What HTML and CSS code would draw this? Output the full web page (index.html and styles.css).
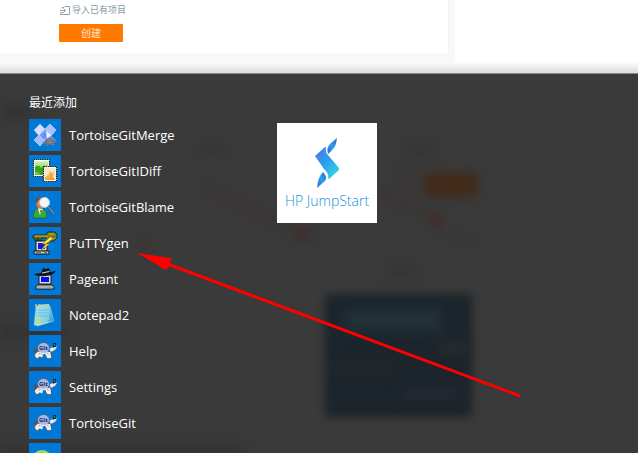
FILE: index.html
```html
<!DOCTYPE html>
<html lang="zh-CN">
<head>
<meta charset="utf-8">
<meta name="viewport" content="width=device-width, initial-scale=1">
<title>开始菜单</title>
<link rel="stylesheet" href="styles.css">
</head>
<body>
<section class="page">
  <div class="frame">
    <div class="card">
      <a class="import" href="#">
        <svg class="import-icon" viewBox="0 0 11 9"><path d="M3 2.500V1.500H5L6 .5H10.500V8.500H1.500V6.500M1 4.500H6M4.500 2.500 6.500 4.500 4.500 6.500H2" fill="none" stroke="#8ea5b0"/></svg>
        导入已有项目
      </a>
      <button class="create" type="button">创建</button>
    </div>
  </div>
</section>

<main class="menu">
  <svg class="backdrop" viewBox="0 74 638 379" aria-hidden="true">
    <defs>
      <filter id="soft" x="-30%" y="-30%" width="160%" height="160%" color-interpolation-filters="sRGB"><feGaussianBlur stdDeviation="4"/></filter>
      <filter id="softer" x="-30%" y="-50%" width="160%" height="200%" color-interpolation-filters="sRGB"><feGaussianBlur stdDeviation="6"/></filter>
    </defs>
    <g filter="url(#soft)">
      <rect x="325" y="294" width="147" height="123" fill="#1c252b"/>
      <rect x="424" y="173" width="54" height="23" fill="#412a18"/>
      <path d="M205 188 300 232" stroke="#3d3433" stroke-width="7"/>
      <path d="M366 186 430 215" stroke="#3d3332" stroke-width="7"/>
      <circle cx="303" cy="235" r="8" fill="#412e2f"/>
      <circle cx="436" cy="221" r="8" fill="#422c2e"/>
      <circle cx="144" cy="246" r="6" fill="#3b3531"/>
      <ellipse cx="461" cy="239" rx="10" ry="5" fill="#3c3531"/>
      <path d="M403 167V190" stroke="#3c3635" stroke-width="10"/>
    </g>
    <g filter="url(#softer)">
      <rect x="345" y="308" width="96" height="24" fill="#213137"/>
      <rect x="334" y="361" width="60" height="16" fill="#22292c"/>
      <rect x="404" y="386" width="54" height="16" fill="#222930"/>
      <rect x="438" y="341" width="30" height="14" fill="#262b2d"/>
    </g>
    <g filter="url(#softer)" fill="#323232">
      <rect x="0" y="326" width="68" height="12"/>
      <rect x="0" y="446" width="245" height="12"/>
      <rect x="200" y="146" width="24" height="7"/>
      <rect x="408" y="146" width="24" height="8"/>
      <rect x="390" y="267" width="24" height="8"/>
      <rect x="2" y="105" width="28" height="14"/>
    </g>
  </svg>

  <section class="recent">
    <h1 class="heading">最近添加</h1>
    <ul class="apps">
      <li><a class="app" href="#">
        <svg class="icon" viewBox="0 0 32 32">
          <defs><linearGradient id="mergeBlue" x1="0" y1="0" x2="1" y2="1"><stop offset="0" stop-color="#a9c0ff"/><stop offset=".5" stop-color="#5c8cf8"/><stop offset="1" stop-color="#c2d4ff"/></linearGradient></defs>
          <path d="M5 11 11 5 16 10 10 17Z" fill="#d5defa" stroke="#9eb9f3" stroke-width=".7"/>
          <path d="M16 10 21 5 27 11 22 17Z" fill="#a9befa" stroke="#c4d5ff" stroke-width=".7"/>
          <path d="M5 21 10 16 16 21 11 27Z" fill="#a8bdf8" stroke="#c6d5fd" stroke-width=".7"/>
          <path d="M16 21 21 16 27 21 22 26Z" fill="#7b9df0"/>
          <path d="M10 16 16 10 22 16 16 22Z" fill="url(#mergeBlue)" stroke="#c3d4ff" stroke-width=".7"/>
          <path d="M17 12 22 16 18 19Z" fill="#f2f6ff"/>
          <ellipse cx="21" cy="22.500" rx="5" ry="3.500" fill="#6b737d"/>
          <path d="M17 23 15 25M18 25V27M24 25V27M25 23 28 22" stroke="#727a81" stroke-width="1.600"/>
          <path d="M18 21H24M18 23.500H24M21 20V25" stroke="#949ba3" stroke-width=".6"/>
        </svg>TortoiseGitMerge</a></li>
      <li><a class="app" href="#">
        <svg class="icon" viewBox="0 0 32 32">
          <defs>
            <linearGradient id="greenStamp" x1="0" y1="0" x2="0" y2="1"><stop offset="0" stop-color="#d7f5b9"/><stop offset=".7" stop-color="#6cc845"/></linearGradient>
            <linearGradient id="orangeStamp" x1="0" y1="0" x2="1" y2="1"><stop offset="0" stop-color="#fbc878"/><stop offset="1" stop-color="#f2931f"/></linearGradient>
          </defs>
          <rect x="4.500" y="4.500" width="16" height="17" fill="#fff"/>
          <rect x="4.500" y="4.500" width="16" height="17" fill="none" stroke="#102515" stroke-width="1.200" stroke-dasharray="1.400 .8"/>
          <rect x="6" y="6" width="13" height="14" fill="url(#greenStamp)"/>
          <path d="M6 12Q10 9 12 13Q16 9 19 12V16H15V20H11L9 17H6Z" fill="#37a51d"/>
          <rect x="14.500" y="11.500" width="13" height="15" fill="#fffaf0"/>
          <rect x="14.500" y="11.500" width="13" height="15" fill="none" stroke="#24190d" stroke-width="1.200" stroke-dasharray="1.400 .8"/>
          <rect x="16" y="13" width="10" height="12" fill="#fae6ca"/>
          <path d="M16 23 18 20 19 21 21 16 23 18 25 17 24 22 26 25H16Z" fill="url(#orangeStamp)"/>
        </svg>TortoiseGitIDiff</a></li>
      <li><a class="app" href="#">
        <svg class="icon" viewBox="0 0 32 32">
          <path d="M4.500 27Q4 19 9 17L12 20 14 18Q19 20 17 27Z" fill="#35ad35" stroke="#156d25" stroke-width=".7"/>
          <path d="M9 17 11 24 14 18Z" fill="#f5f7e9"/>
          <path d="M11 19 12 24 13 19Z" fill="#d33d25"/>
          <ellipse cx="11" cy="12" rx="4" ry="5.500" fill="#c9834f"/>
          <path d="M7 13V9Q8 6 12 6L10 9Q8 10 7 13" fill="#79482b"/>
          <path d="M19 16 25 24" stroke="#4b5662" stroke-width="2"/>
          <path d="M19.500 16 25 23" stroke="#adb7c0" stroke-width=".8"/>
          <circle cx="15.500" cy="11.500" r="5" fill="#f2f5fa" stroke="#c4cbd4"/>
          <path d="M13 11Q14 8 17 9" fill="none" stroke="#fff"/>
        </svg>TortoiseGitBlame</a></li>
      <li><a class="app" href="#">
        <svg class="icon" viewBox="0 0 32 32">
          <path d="M5 8H17L19 5H26L28 8V11L25 14H20L17 11H12V14H10V11H8V14H6V11H4V9Z" fill="#878119" stroke="#242607"/>
          <path d="M6 9H18M20 7H25" stroke="#b9ad35"/>
          <path d="M23 9H26V10H23Z" fill="#0078d7"/>
          <path d="M7 14H18V24H7Z" fill="#e0dfd8" stroke="#181818"/>
          <path d="M9 16H16V22H9Z" fill="#1515e1"/>
          <path d="M5 24H20V27H5Z" fill="#d1d1cc" stroke="#171717"/>
          <path d="M7 25.500H12M15 25.500H18" stroke="#77776f"/>
          <path d="M21 10 13 17H17L11 24 21 17H17L25 11Z" fill="#ffee29" stroke="#6b681d" stroke-width=".6"/>
        </svg>PuTTYgen</a></li>
      <li><a class="app" href="#">
        <svg class="icon" viewBox="0 0 32 32">
          <path d="M10 12H22V21H10Z" fill="#deddd8" stroke="#15171a"/>
          <path d="M12 14H20V19H12Z" fill="#0909f2"/>
          <path d="M8 22H23L25 24V26H7V23Z" fill="#deddd6" stroke="#181818"/>
          <path d="M8 24H24M18 25H22" stroke="#86867e"/>
          <path d="M12 10 14 5 17 6 20 5 21 9 27 8Q25 12 16 13Q8 14 5 11Z" fill="#11161a"/>
          <path d="M13 9.500 20 8 20.500 9 13 10.500Z" fill="#d9d5cd"/>
        </svg>Pageant</a></li>
      <li><a class="app" href="#">
        <svg class="icon" viewBox="0 0 32 32">
          <defs><linearGradient id="padBlue" x1="0" y1="0" x2="1" y2="1"><stop offset="0" stop-color="#b9eeff"/><stop offset="1" stop-color="#269bd5"/></linearGradient></defs>
          <path d="M7 7H21L25 22 9 27 5 26Z" fill="#e4f5d4" stroke="#73a7b2" stroke-width=".6"/>
          <path d="M9 6 20 5 25 22 12 24Z" fill="url(#padBlue)"/>
          <path d="M7 7H20V20L17 25 6 26Z" fill="#8cd9ee" fill-opacity=".75"/>
          <path d="M7 11H19M7 14H19M7 17H19" stroke="#5bb6d7" stroke-width=".7"/>
          <path d="M6 20H16M6 22H15M6 24H14" stroke="#b4dc7b"/>
          <path d="M7 8V5M10 8V5M13 8V5M16 8V5M19 8V5" stroke="#dbce83" stroke-width="1.300"/>
        </svg>Notepad2</a></li>
      <li><a class="app" href="#">
        <svg class="icon" viewBox="0 0 32 32">
          <defs>
            <g id="turtle">
              <path d="M5.500 14 8 17M10 17 7 20 8 22 12 19M17 18 19 22 21 22 20 17" fill="none" stroke="#50545f" stroke-width="3.600" stroke-linejoin="round"/>
              <path d="M10 17 7 20 8 22 12 19M17 18 19 22 21 22 20 17M13 19 12 22" fill="none" stroke="#f0ece5" stroke-width="2.400" stroke-linejoin="round"/>
              <path d="M20 14 23 12 25 13 26 10 28 12 26 15 22 17Z" fill="#f2eee9" stroke="#777b82" stroke-width=".5"/>
              <path d="M24 8H27V12H24Z" fill="#142c42"/>
              <path d="M25 9 26 11" stroke="#20ad9d"/>
              <ellipse cx="14.500" cy="13" rx="6" ry="5.500" fill="#a5b8ee" stroke="#4e5b83" stroke-width=".8"/>
              <path d="M10 17Q15 20 19 17" fill="none" stroke="#ece9e8" stroke-width="1.300"/>
              <text x="10" y="15" class="shell-text">Git</text>
            </g>
          </defs>
          <use href="#turtle"/>
        </svg>Help</a></li>
      <li><a class="app" href="#"><svg class="icon" viewBox="0 0 32 32"><use href="#turtle"/></svg>Settings</a></li>
      <li><a class="app" href="#"><svg class="icon" viewBox="0 0 32 32"><use href="#turtle"/></svg>TortoiseGit</a></li>
      <li><a class="app" href="#" aria-label="应用"><svg class="icon" viewBox="0 0 32 32"><ellipse cx="13" cy="15" rx="9" ry="8" fill="#92df58"/></svg></a></li>
    </ul>
  </section>

  <a class="tile" href="#">
    <svg class="tile-logo" viewBox="0 0 26 52">
      <defs>
        <linearGradient id="ribbon" x1="0" y1="0" x2="1" y2="1"><stop offset="0" stop-color="#4b70ee"/><stop offset=".5" stop-color="#2ba4e9"/><stop offset="1" stop-color="#37e2ea"/></linearGradient>
        <linearGradient id="tip" x1="0" y1="1" x2="1" y2="0"><stop offset="0" stop-color="#3268d2"/><stop offset=".5" stop-color="#27a0ef"/><stop offset="1" stop-color="#3268d2"/></linearGradient>
      </defs>
      <path d="M23 1 22 7Q20 12 14 17Q12 10 17 6Z" fill="url(#tip)"/>
      <path d="M11 10 1 19 10 32Q15 36 14 41L15 42 25 33V31L14 18Q11 15 12 10Z" fill="url(#ribbon)"/>
      <path d="M9 35Q14 40 11 44L3 51Q4 40 9 35Z" fill="url(#tip)"/>
    </svg>
    <span>HP JumpStart</span>
  </a>

  <svg class="arrow" viewBox="0 74 638 379" aria-hidden="true">
    <path d="M165 263 520 396" fill="none" stroke="#f00" stroke-width="3"/>
    <path d="M137 253 171 258 170 265 166 270Z" fill="#f00"/>
  </svg>
</main>
</body>
</html>
```
FILE: styles.css
```css
* {
  box-sizing: border-box;
}

body {
  margin: 0;
  height: 100vh;
  overflow: hidden;
  display: flex;
  flex-direction: column;
  background: #fff;
  font-family: "Open Sans", "Noto Sans CJK SC", sans-serif;
}

.page {
  flex: none;
  padding-bottom: 11px;
  background: linear-gradient(#fff 84%, #dcdcdc) no-repeat;
}

.frame {
  width: 455px;
  max-width: 100%;
  padding: 0 6px 7px 0;
  background: #f8f8f8;
}

.card {
  display: flex;
  flex-direction: column;
  align-items: flex-start;
  gap: 8px;
  padding: 4px 0 12px 59px;
  background: #fff;
  border: solid #f4f4f4;
  border-width: 0 1px 1px 0;
}

.import {
  display: flex;
  align-items: center;
  gap: 2px;
  color: #8499a3;
  font-size: 9px;
  line-height: 12px;
  text-decoration: none;
}

.import-icon {
  width: 11px;
  height: 9px;
}

.create {
  width: 64px;
  height: 18px;
  padding: 0;
  border: 0;
  border-radius: 1px;
  background: #ff7800;
  color: #ffe6d0;
  font-family: inherit;
  font-size: 10px;
  line-height: 18px;
}

.menu {
  position: relative;
  flex: 1;
  min-height: 0;
  overflow: hidden;
  display: grid;
  grid-template-columns: 248px 1fr;
  align-items: start;
  padding: 20px 0 0 29px;
  border-top: 1px solid #8c8c8c;
  background: #3a3a3a;
}

.backdrop,
.arrow {
  position: absolute;
  top: 0;
  left: 0;
  width: 638px;
  height: 379px;
  pointer-events: none;
}

.recent,
.tile {
  position: relative;
}

.heading {
  margin: 0 0 7px;
  color: #fff;
  font-size: 12px;
  font-weight: 400;
  line-height: 18px;
}

.apps {
  display: grid;
  gap: 4px;
  margin: 0;
  padding: 0;
  list-style: none;
}

.app {
  display: flex;
  align-items: center;
  gap: 8px;
  color: #fff;
  font-size: 13px;
  line-height: 32px;
  text-decoration: none;
}

.icon {
  flex: none;
  width: 32px;
  height: 32px;
  background: #0078d7;
}

.shell-text {
  fill: #111a38;
  font-size: 6px;
  font-weight: 700;
}

.tile {
  display: flex;
  flex-direction: column;
  align-items: center;
  gap: 2px;
  width: 100px;
  height: 100px;
  margin-top: 29px;
  padding-top: 14px;
  background: #fff;
  color: #1593d2;
  font-family: "Open Sans", sans-serif;
  font-size: 14px;
  font-weight: 300;
  line-height: 20px;
  text-decoration: none;
  white-space: nowrap;
}

.tile-logo {
  width: 26px;
  height: 52px;
}
```
